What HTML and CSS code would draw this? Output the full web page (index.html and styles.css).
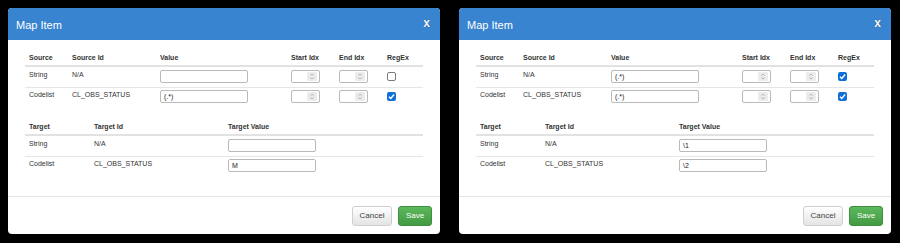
FILE: index.html
```html
<!DOCTYPE html>
<html lang="en">
  <head>
    <meta charset="utf-8">
    <title>Map Item</title>
    <link rel="stylesheet" href="styles.css">
  </head>
  <body>
    <div class="modal">
      <div class="modal_header">
        <div class="modal_title">Map Item</div>
        <div class="close">x</div>
      </div>
      <div class="modal_body">
        <table class="map_table source_table">
          <colgroup><col class="c1"><col class="c2"><col class="c3"><col class="c4"><col class="c5"><col class="c6"></colgroup>
          <thead>
            <tr><th>Source</th><th>Source Id</th><th>Value</th><th>Start Idx</th><th>End Idx</th><th>RegEx</th></tr>
          </thead>
          <tbody>
            <tr>
              <td>String</td><td>N/A</td>
              <td><div class="field value_field"></div></td>
              <td><div class="field num_field"><span class="spin"><svg viewBox="0 0 10 10"><path d="M3 4 L5 2.2 L7 4 M3 6 L5 7.8 L7 6" /></svg></span></div></td>
              <td><div class="field num_field"><span class="spin"><svg viewBox="0 0 10 10"><path d="M3 4 L5 2.2 L7 4 M3 6 L5 7.8 L7 6" /></svg></span></div></td>
              <td><span class="check"></span></td>
            </tr>
            <tr>
              <td>Codelist</td><td>CL_OBS_STATUS</td>
              <td><div class="field value_field">(.*)</div></td>
              <td><div class="field num_field"><span class="spin"><svg viewBox="0 0 10 10"><path d="M3 4 L5 2.2 L7 4 M3 6 L5 7.8 L7 6" /></svg></span></div></td>
              <td><div class="field num_field"><span class="spin"><svg viewBox="0 0 10 10"><path d="M3 4 L5 2.2 L7 4 M3 6 L5 7.8 L7 6" /></svg></span></div></td>
              <td><span class="check checked"><svg viewBox="0 0 10 10"><path d="M2.2 5.2 L4.2 7.2 L7.9 2.8" /></svg></span></td>
            </tr>
          </tbody>
        </table>

        <table class="map_table target_table">
          <colgroup><col class="t1"><col class="t2"><col class="t3"></colgroup>
          <thead>
            <tr><th>Target</th><th>Target Id</th><th>Target Value</th></tr>
          </thead>
          <tbody>
            <tr><td>String</td><td>N/A</td><td><div class="field value_field"></div></td></tr>
            <tr><td>Codelist</td><td>CL_OBS_STATUS</td><td><div class="field value_field">M</div></td></tr>
          </tbody>
        </table>
      </div>
      <div class="modal_footer">
        <div class="btn btn_cancel">Cancel</div>
        <div class="btn btn_save">Save</div>
      </div>
    </div>

    <div class="modal">
      <div class="modal_header">
        <div class="modal_title">Map Item</div>
        <div class="close">x</div>
      </div>
      <div class="modal_body">
        <table class="map_table source_table">
          <colgroup><col class="c1"><col class="c2"><col class="c3"><col class="c4"><col class="c5"><col class="c6"></colgroup>
          <thead>
            <tr><th>Source</th><th>Source Id</th><th>Value</th><th>Start Idx</th><th>End Idx</th><th>RegEx</th></tr>
          </thead>
          <tbody>
            <tr>
              <td>String</td><td>N/A</td>
              <td><div class="field value_field">(.*)</div></td>
              <td><div class="field num_field"><span class="spin"><svg viewBox="0 0 10 10"><path d="M3 4 L5 2.2 L7 4 M3 6 L5 7.8 L7 6" /></svg></span></div></td>
              <td><div class="field num_field"><span class="spin"><svg viewBox="0 0 10 10"><path d="M3 4 L5 2.2 L7 4 M3 6 L5 7.8 L7 6" /></svg></span></div></td>
              <td><span class="check checked"><svg viewBox="0 0 10 10"><path d="M2.2 5.2 L4.2 7.2 L7.9 2.8" /></svg></span></td>
            </tr>
            <tr>
              <td>Codelist</td><td>CL_OBS_STATUS</td>
              <td><div class="field value_field">(.*)</div></td>
              <td><div class="field num_field"><span class="spin"><svg viewBox="0 0 10 10"><path d="M3 4 L5 2.2 L7 4 M3 6 L5 7.8 L7 6" /></svg></span></div></td>
              <td><div class="field num_field"><span class="spin"><svg viewBox="0 0 10 10"><path d="M3 4 L5 2.2 L7 4 M3 6 L5 7.8 L7 6" /></svg></span></div></td>
              <td><span class="check checked"><svg viewBox="0 0 10 10"><path d="M2.2 5.2 L4.2 7.2 L7.9 2.8" /></svg></span></td>
            </tr>
          </tbody>
        </table>

        <table class="map_table target_table">
          <colgroup><col class="t1"><col class="t2"><col class="t3"></colgroup>
          <thead>
            <tr><th>Target</th><th>Target Id</th><th>Target Value</th></tr>
          </thead>
          <tbody>
            <tr><td>String</td><td>N/A</td><td><div class="field value_field">\1</div></td></tr>
            <tr><td>Codelist</td><td>CL_OBS_STATUS</td><td><div class="field value_field">\2</div></td></tr>
          </tbody>
        </table>
      </div>
      <div class="modal_footer">
        <div class="btn btn_cancel">Cancel</div>
        <div class="btn btn_save">Save</div>
      </div>
    </div>
  </body>
</html>
```

FILE: styles.css
```css
html, body {
  margin:0;
  padding:0;
}
body {
  background-color:#000;
  font-family: "Liberation Sans", Arial, sans-serif;
  color:#333;
  display:flex;
  flex-direction:row;
  gap:19px;
  padding:8px;
  height:243px;
  box-sizing:border-box;
}

.modal {
  width:432px;
  height:226px;
  background-color:#fff;
  border-radius:4px;
  overflow:hidden;
  display:flex;
  flex-direction:column;
}
.modal_header {
  height:32px;
  flex-shrink:0;
  background-color:#3984d0;
  color:#fff;
  display:flex;
  flex-direction:row;
  justify-content:space-between;
  align-items:center;
  padding:0 10px 0 8px;
}
.modal_title {
  font-size:11px;
  padding-top:1px;
}
.close {
  font-size:12px;
  font-weight:bold;
  color:#f4f6f8;
  text-shadow:0 0 1px rgba(0,0,0,0.5);
  padding-bottom:2px;
}

.modal_body {
  flex-grow:1;
  padding:10px 17px 0 17px;
}
.map_table {
  width:398px;
  table-layout:fixed;
  border-collapse:separate;
  border-spacing:0;
  font-size:7px;
}
.target_table {
  margin-top:12px;
}
.c1 { width:43px; }
.c2 { width:88px; }
.c3 { width:131px; }
.c4 { width:48px; }
.c5 { width:48px; }
.c6 { width:40px; }
.t1 { width:65px; }
.t2 { width:134px; }
.t3 { width:199px; }

.map_table th {
  height:15px;
  padding:0 4px;
  text-align:left;
  vertical-align:middle;
  font-weight:bold;
  border-bottom:2px solid #e2e2e2;
}
.map_table td {
  padding:2px 4px 4px 4px;
  vertical-align:top;
  line-height:10px;
  border-top:1px solid #e6e6e6;
}
.map_table tbody tr:first-child td {
  border-top:none;
  padding-top:3px;
}

.field {
  height:13px;
  box-sizing:border-box;
  border:1px solid #b9b9b9;
  border-radius:2px;
  background-color:#fff;
  padding-left:3px;
  font-size:7px;
  line-height:11px;
  color:#222;
}
.value_field {
  width:88px;
}
.num_field {
  width:29px;
  position:relative;
}
.spin {
  position:absolute;
  right:2px;
  top:1px;
  width:10px;
  height:9px;
  background-color:#ececec;
  border-radius:1px;
}
.spin svg {
  width:10px;
  height:9px;
  display:block;
}
.spin path {
  fill:none;
  stroke:#a0a0a0;
  stroke-width:0.8;
}

.check {
  display:block;
  width:9px;
  height:9px;
  box-sizing:border-box;
  border:1px solid #7a7a7a;
  border-radius:2px;
  margin-top:2px;
  background-color:#fff;
}
.check.checked {
  border:none;
  background-color:#0f6fd8;
}
.check svg {
  width:9px;
  height:9px;
  display:block;
}
.check path {
  fill:none;
  stroke:#fff;
  stroke-width:1.6;
}

.modal_footer {
  flex-shrink:0;
  border-top:1px solid #e5e5e5;
  padding:9px 8px 8px 0;
  display:flex;
  flex-direction:row;
  justify-content:flex-end;
  gap:6px;
}
.btn {
  height:20px;
  box-sizing:border-box;
  border-radius:3px;
  font-size:8px;
  line-height:18px;
  user-select:none;
}
.btn_cancel {
  width:40px;
  text-align:center;
  color:#444;
  border:1px solid #cfcfcf;
  background-image:linear-gradient(#fff, #e4e4e4);
}
.btn_save {
  width:34px;
  text-align:center;
  color:#fff;
  border:1px solid #3e8f3e;
  background-image:linear-gradient(#5cb85c, #429a42);
}
```
